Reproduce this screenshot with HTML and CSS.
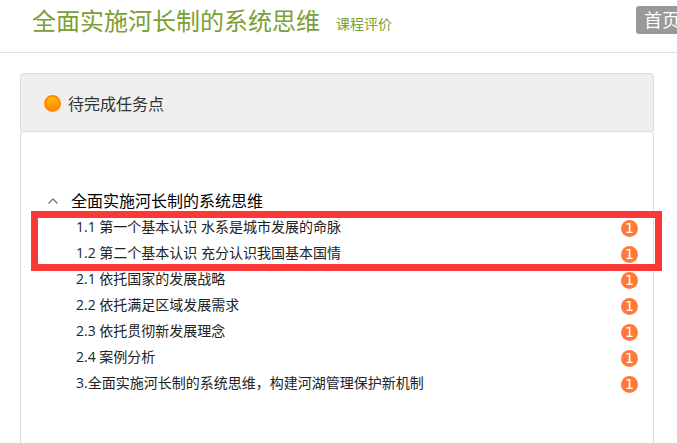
FILE: index.html
```html
<!DOCTYPE html>
<html lang="zh-CN">
  <head>
  <meta charset="utf-8">
  <meta name="viewport" content="width=device-width, initial-scale=1">
  <title>全面实施河长制的系统思维</title>
  <link rel="stylesheet" href="styles.css">
  </head>
  <body>
    <header class="header">
      <h1 class="course">全面实施河长制的系统思维</h1>
      <a class="rate" href="#">课程评价</a>
      <a class="home" href="#">首页</a>
    </header>

    <main class="panel">
      <div class="panel-head">
        <span class="dot"></span>
        <h2>待完成任务点</h2>
      </div>
      <div class="panel-body">
        <button class="chapter" type="button">
          <svg class="arrow" width="12" height="8" viewBox="0 0 12 8"><path d="M1.5 6.5 L6 2 L10.5 6.5" fill="none" stroke="#777" stroke-width="1.4"/></svg>
          全面实施河长制的系统思维
        </button>
        <ul class="tasks">
          <li class="marked">
            <ul>
              <li class="task"><a href="#">1.1 第一个基本认识 水系是城市发展的命脉</a><span class="count">1</span></li>
              <li class="task"><a href="#">1.2 第二个基本认识 充分认识我国基本国情</a><span class="count">1</span></li>
            </ul>
          </li>
          <li class="task"><a href="#">2.1 依托国家的发展战略</a><span class="count">1</span></li>
          <li class="task"><a href="#">2.2 依托满足区域发展需求</a><span class="count">1</span></li>
          <li class="task"><a href="#">2.3 依托贯彻新发展理念</a><span class="count">1</span></li>
          <li class="task"><a href="#">2.4 案例分析</a><span class="count">1</span></li>
          <li class="task"><a href="#">3.全面实施河长制的系统思维，构建河湖管理保护新机制</a><span class="count">1</span></li>
        </ul>
      </div>
    </main>
  </body>
</html>
```

FILE: styles.css
```css
* {
  box-sizing: border-box;
}
body {
  margin: 0;
  min-height: 100vh;
  display: flex;
  flex-direction: column;
  overflow-x: hidden;
  background: #fff;
  color: #222;
  font-family: "Open Sans", "Noto Sans CJK SC", sans-serif;
  font-size: 14px;
}
a {
  color: inherit;
  text-decoration: none;
}
ul {
  list-style: none;
  margin: 0;
  padding: 0;
}

/* top bar */
.header {
  display: flex;
  align-items: flex-start;
  height: 53px;
  padding: 6px 0 0 32px;
  border-bottom: 1px solid #e1e1e1;
  color: #7b9f35;
  white-space: nowrap;
}
.course {
  margin: 0;
  font-size: 24px;
  line-height: 30px;
  font-weight: normal;
}
.rate {
  margin-left: 16px;
  line-height: 36px;
}
.home {
  margin-left: auto;
  margin-right: -11px; /* runs off the right edge */
  padding: 0 8px;
  border-radius: 3px;
  background: #999;
  color: #fff;
  font-size: 18px;
  line-height: 28px;
}

/* task panel */
.panel {
  flex: 1;
  display: flex;
  flex-direction: column;
  margin: 20px 23px 0 20px;
}
.panel-head {
  display: flex;
  align-items: center;
  gap: 7px;
  height: 58px;
  padding: 2px 23px 0;
  border: 1px solid #dcdcdc;
  border-bottom: 0;
  border-radius: 4px 4px 0 0;
  background: #efefef;
}
.panel-head h2 {
  margin: 0;
  color: #333;
  font-size: 16px;
  line-height: 24px;
  font-weight: normal;
}
.dot {
  width: 17px;
  height: 17px;
  border: 2px solid #ff8a00;
  border-radius: 50%;
  background: linear-gradient(#ffc000, #ff8400);
}
.panel-body {
  flex: 1;
  padding: 57px 15px 40px;
  border: 1px solid #dcdcdc;
  border-bottom: 0;
  border-radius: 4px 4px 0 0;
}
.chapter {
  display: flex;
  align-items: center;
  gap: 12px;
  padding: 0 0 0 11px;
  border: 0;
  background: none;
  color: #000;
  font-family: inherit;
  font-size: 16px;
  line-height: 24px;
}
.tasks {
  margin-top: 2px;
}
.task {
  display: flex;
  align-items: center;
  justify-content: space-between;
  height: 26px;
  padding-left: 40px;
}
.task a {
  line-height: 24px;
  margin-bottom: 2px;
}
.count {
  width: 17px;
  height: 17px;
  border-radius: 50%;
  background: #ff7a38;
  color: #fff;
  font-family: "DejaVu Sans", sans-serif;
  font-size: 14px;
  line-height: 17px;
  text-align: center;
}

/* red frame round the first two tasks */
.marked {
  position: relative;
}
.marked::after {
  content: "";
  position: absolute;
  top: -4px;
  right: -24px;
  bottom: -4px;
  left: -5px;
  border: 7px solid #fb3838;
  pointer-events: none;
}
```
